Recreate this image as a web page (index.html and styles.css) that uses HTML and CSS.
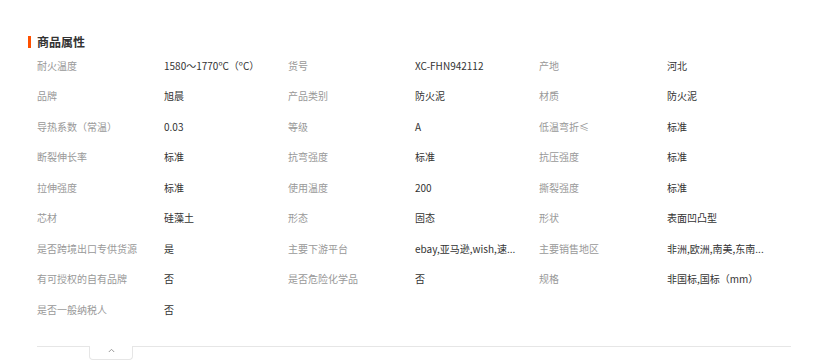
FILE: index.html
```html
<!DOCTYPE html>
<html lang="zh-CN">
<head>
<meta charset="utf-8">
<title>商品属性</title>
<link rel="stylesheet" href="styles.css">
</head>
<body>
<div class="attrs">
  <div class="attrs-head">
    <span class="attrs-bar"></span>
    <h2 class="attrs-title">商品属性</h2>
  </div>
  <div class="attrs-grid">
    <div class="k">耐火温度</div><div class="v">1580～1770ºC（ºC）</div>
    <div class="k">货号</div><div class="v">XC-FHN942112</div>
    <div class="k">产地</div><div class="v">河北</div>

    <div class="k">品牌</div><div class="v">旭晨</div>
    <div class="k">产品类别</div><div class="v">防火泥</div>
    <div class="k">材质</div><div class="v">防火泥</div>

    <div class="k">导热系数（常温）</div><div class="v">0.03</div>
    <div class="k">等级</div><div class="v">A</div>
    <div class="k">低温弯折≤</div><div class="v">标准</div>

    <div class="k">断裂伸长率</div><div class="v">标准</div>
    <div class="k">抗弯强度</div><div class="v">标准</div>
    <div class="k">抗压强度</div><div class="v">标准</div>

    <div class="k">拉伸强度</div><div class="v">标准</div>
    <div class="k">使用温度</div><div class="v">200</div>
    <div class="k">撕裂强度</div><div class="v">标准</div>

    <div class="k">芯材</div><div class="v">硅藻土</div>
    <div class="k">形态</div><div class="v">固态</div>
    <div class="k">形状</div><div class="v">表面凹凸型</div>

    <div class="k">是否跨境出口专供货源</div><div class="v">是</div>
    <div class="k">主要下游平台</div><div class="v">ebay,亚马逊,wish,速...</div>
    <div class="k">主要销售地区</div><div class="v">非洲,欧洲,南美,东南...</div>

    <div class="k">有可授权的自有品牌</div><div class="v">否</div>
    <div class="k">是否危险化学品</div><div class="v">否</div>
    <div class="k">规格</div><div class="v">非国标,国标（mm）</div>

    <div class="k">是否一般纳税人</div><div class="v">否</div>
  </div>
  <div class="attrs-foot">
    <div class="toggle">
      <svg class="toggle-icon" width="7" height="5" viewBox="0 0 7 5"><path d="M0.8 4 L3.5 1.3 L6.2 4" fill="none" stroke="#999" stroke-width="1"/></svg>
    </div>
  </div>
</div>
</body>
</html>
```

FILE: styles.css
```css
* { box-sizing: border-box; }
html, body { margin: 0; padding: 0; background: #fff; }
body {
  font-family: "Noto Sans CJK SC", "Liberation Sans", sans-serif;
  font-size: 10px;
  color: #333;
}
.attrs {
  padding: 36px 0 0 28px;
  width: 791px;
}
.attrs-head {
  display: flex;
  align-items: center;
  height: 12px;
  gap: 6px;
}
.attrs-bar {
  display: block;
  width: 3px;
  height: 12px;
  background: #ff5000;
}
.attrs-title {
  margin: 0;
  font-size: 12px;
  font-weight: bold;
  line-height: 12px;
  color: #333;
}
.attrs-grid {
  margin-top: 2px;
  padding-left: 9px;
  display: grid;
  grid-template-columns: 127px 124px 127px 124px 128px 124px;
  grid-auto-rows: 30.5px;
  align-items: center;
}
.k {
  color: #999;
  white-space: nowrap;
}
.v {
  color: #333;
  white-space: nowrap;
}
.attrs-foot {
  margin-top: 21px;
  margin-left: 9px;
  border-top: 1px solid #e6e6e6;
  height: 14px;
}
.toggle {
  margin-left: 52px;
  margin-top: -1px;
  width: 44px;
  height: 14px;
  background: #fff;
  border: 1px solid #e6e6e6;
  border-top: none;
  border-radius: 0 0 4px 4px;
  display: flex;
  justify-content: center;
  align-items: flex-start;
  padding-top: 2px;
}
.toggle-icon { display: block; }
```
